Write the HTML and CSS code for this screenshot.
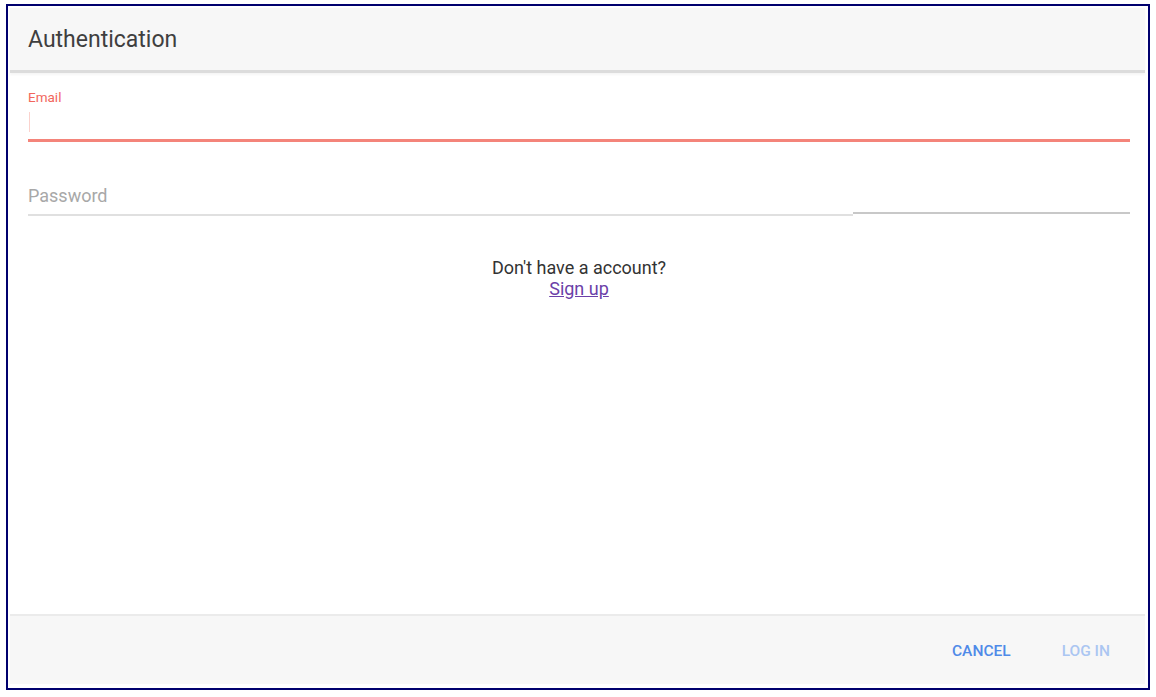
FILE: index.html
```html
<!DOCTYPE html>
<html lang="en">
<head>
<meta charset="utf-8">
<title>Authentication</title>
<link rel="stylesheet" href="styles.css">
</head>
<body>
<div class="frame">
  <div class="dialog">
    <div class="header">Authentication</div>
    <div class="content">
      <div class="field field-email">
        <div class="label">Email</div>
        <div class="input"><span class="caret"></span></div>
        <div class="line-red"></div>
      </div>
      <div class="field field-password">
        <div class="placeholder">Password</div>
        <div class="line-split"><span class="seg-a"></span><span class="seg-b"></span></div>
      </div>
      <div class="signup">
        <div class="question">Don't have a account?</div>
        <a class="signup-link" href="#">Sign up</a>
      </div>
    </div>
    <div class="footer">
      <span class="btn btn-cancel">CANCEL</span>
      <span class="btn btn-login">LOG IN</span>
    </div>
  </div>
</div>
</body>
</html>
```

FILE: styles.css
```css
html, body {
  margin: 0;
  padding: 0;
  background: #ffffff;
}

body {
  font-family: Roboto, "Liberation Sans", Arial, sans-serif;
}

.frame {
  box-sizing: border-box;
  width: 1144px;
  height: 686px;
  margin: 4px 0 0 6px;
  border: 2px solid #00006e;
  padding: 2px 3px 4px 2px;
}

.dialog {
  display: flex;
  flex-direction: column;
  height: 100%;
}

.header {
  height: 62px;
  flex: none;
  display: flex;
  align-items: center;
  padding: 0 18px;
  background: #f7f7f7;
  color: #3f3f3f;
  font-size: 23px;
  border-bottom: 3px solid #dcdcdc;
  box-shadow: 0 2px 2px rgba(0, 0, 0, 0.04);
}

.content {
  flex: 1;
  padding: 16px 15px 0 18px;
}

.field-email .label {
  font-size: 13.5px;
  line-height: 16px;
  color: #f2665c;
}

.field-email .input {
  height: 31px;
  padding-top: 7px;
  box-sizing: border-box;
  display: flex;
  align-items: flex-start;
}

.caret {
  display: block;
  width: 1px;
  height: 20px;
  margin-left: 1px;
  background: #fbd2cd;
}

.line-red {
  height: 3px;
  margin-top: 3px;
  background: #f4847a;
}

.field-password {
  margin-top: 43px;
}

.placeholder {
  font-size: 18px;
  line-height: 22px;
  color: #a8a8a8;
}

.line-split {
  display: flex;
  align-items: flex-start;
  margin-top: 5px;
  height: 4px;
}

.seg-a {
  display: block;
  width: 825px;
  height: 2px;
  margin-top: 2px;
  background: #e0e0e0;
}

.seg-b {
  display: block;
  flex: 1;
  height: 2px;
  background: #c8c8c8;
}

.signup {
  margin-top: 41px;
  display: flex;
  flex-direction: column;
  align-items: center;
  font-size: 18px;
  line-height: 21px;
}

.question {
  color: #333333;
}

.signup-link {
  color: #6b3fa8;
  text-decoration: underline;
}

.footer {
  height: 68px;
  flex: none;
  display: flex;
  align-items: center;
  justify-content: flex-end;
  gap: 51px;
  padding: 0 35px 0 0;
  background: #f7f7f7;
  border-top: 2px solid #ebebeb;
}

.btn {
  font-size: 15.5px;
  font-weight: 500;
  padding-top: 2px;
}

.btn-cancel {
  color: #4f8ae8;
}

.btn-login {
  color: #abc6f2;
}
```
